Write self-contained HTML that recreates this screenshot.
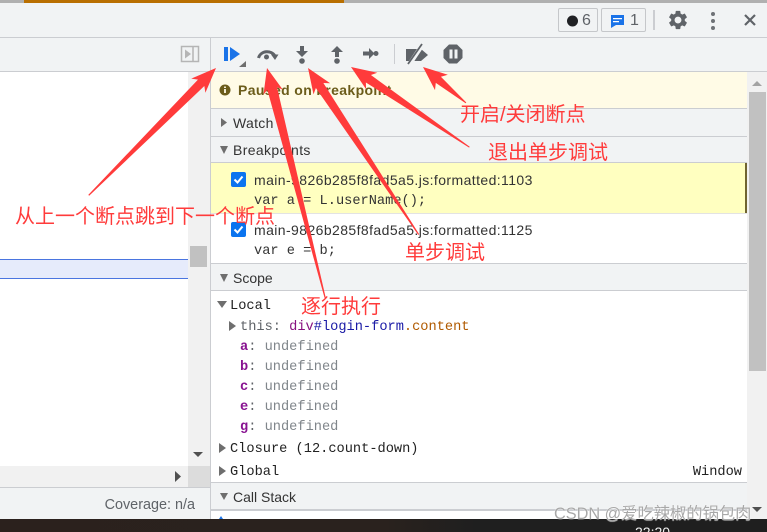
<!DOCTYPE html>
<html lang="zh"><head><meta charset="utf-8"><title>DevTools</title>
<style>
html,body{margin:0;padding:0;width:767px;height:532px;overflow:hidden;background:#f1f3f4}
#r{position:relative;width:767px;height:532px;overflow:hidden;font-family:"Liberation Sans",sans-serif;color:#333}
.b,.t{position:absolute}
.t{white-space:nowrap;line-height:20px;font-size:14px}
.m{font-family:"Liberation Mono","DejaVu Sans Mono",monospace;font-size:13.67px}
.cn{font-family:"Liberation Sans","Noto Sans CJK SC",sans-serif;font-size:20px;color:#ff3b3b;line-height:24px}
svg{position:absolute;left:0;top:0}
</style></head><body><div id="r">
<div class="b" style="left:0;top:0;width:767px;height:3px;background:#b0b0b0"></div>
<div class="b" style="left:24px;top:0;width:320px;height:3px;background:#b96f00"></div>
<div class="b" style="left:0;top:37px;width:767px;height:1px;background:#cbcdd1"></div>
<div class="b" style="left:0;top:71px;width:767px;height:1px;background:#cbcdd1"></div>
<div class="b" style="left:210px;top:38px;width:1px;height:481px;background:#cbcdd1"></div>

<div class="b" style="left:0;top:72px;width:188px;height:394px;background:#fff"></div>
<div class="b" style="left:188px;top:72px;width:22px;height:394px;background:#f1f1f1"></div>
<div class="b" style="left:190px;top:246px;width:17px;height:21px;background:#c1c1c1"></div>
<div class="b" style="left:0;top:259px;width:188px;height:20px;background:#e6ebfb;border-top:1px solid #4a75e0;border-bottom:1px solid #4a75e0;box-sizing:border-box"></div>
<div class="b" style="left:0;top:466px;width:188px;height:21px;background:#f1f1f1"></div>
<div class="b" style="left:188px;top:466px;width:22px;height:21px;background:#dcdcdc"></div>
<div class="b" style="left:0;top:487px;width:210px;height:1px;background:#cbcdd1"></div>
<div class="t" style="right:572px;top:495px;color:#5f6368;font-size:14.4px">Coverage: n/a</div>

<div class="b" style="left:211px;top:72px;width:536px;height:36px;background:#fffbe6"></div>
<div class="b" style="left:211px;top:108px;width:536px;height:1px;background:#cbcdd1"></div>
<div class="b" style="left:211px;top:136px;width:536px;height:1px;background:#cbcdd1"></div>
<div class="b" style="left:211px;top:162px;width:536px;height:1px;background:#cbcdd1"></div>
<div class="b" style="left:211px;top:163px;width:536px;height:50px;background:#ffffc0"></div>
<div class="b" style="left:745px;top:163px;width:2px;height:50px;background:#6f6430"></div>
<div class="b" style="left:211px;top:213px;width:536px;height:1px;background:#e3e3e3"></div>
<div class="b" style="left:211px;top:214px;width:536px;height:49px;background:#fff"></div>
<div class="b" style="left:211px;top:263px;width:536px;height:1px;background:#cbcdd1"></div>
<div class="b" style="left:211px;top:290px;width:536px;height:1px;background:#cbcdd1"></div>
<div class="b" style="left:211px;top:291px;width:536px;height:191px;background:#fff"></div>
<div class="b" style="left:211px;top:482px;width:536px;height:1px;background:#cbcdd1"></div>
<div class="b" style="left:211px;top:509px;width:536px;height:2px;background:#cbcdd1"></div>
<div class="b" style="left:211px;top:511px;width:536px;height:8px;background:#fff"></div>
<div class="b" style="left:747px;top:72px;width:20px;height:447px;background:#f1f1f1"></div>
<div class="b" style="left:749px;top:92px;width:17px;height:279px;background:#c1c1c1"></div>
<div class="b" style="left:0;top:519px;width:767px;height:13px;background:linear-gradient(90deg,#2b211d,#2a221e 50%,#1f1f1f 62%,#1f1f1f)"></div>
<div class="t" style="left:635px;top:522px;color:#f0f0f0;font-size:14px">22:20</div>

<div class="b" style="left:558px;top:8px;width:40px;height:24px;box-sizing:border-box;border:1px solid #c5c7ca;border-radius:2px"></div>
<div class="b" style="left:601px;top:8px;width:45px;height:24px;box-sizing:border-box;border:1px solid #c5c7ca;border-radius:2px"></div>
<div class="t" style="left:582px;top:11px;color:#5f6368;font-size:16px">6</div>
<div class="t" style="left:630px;top:11px;color:#5f6368;font-size:16px">1</div>
<div class="b" style="left:653px;top:10px;width:2px;height:20px;background:#cbcdd1"></div>

<svg width="767" height="532" viewBox="0 0 767 532">
<circle cx="572.500" cy="21" r="5.500" fill="#202124"/>
<path d="M611 15h13v10h-8l-5 3z" fill="#1a73e8"/>
<path d="M613 18h9v1.300h-9zM613 21h6v1.300h-6z" fill="#fff"/>
<g transform="translate(666.600 8.600) scale(.95)"><path fill="#5f6368" d="M19.140 12.940c.04-.3.06-.61.06-.94 0-.32-.02-.64-.07-.94l2.030-1.580c.18-.14.23-.41.12-.61l-1.920-3.320c-.12-.22-.37-.29-.59-.22l-2.390.96c-.5-.38-1.030-.7-1.620-.94l-.36-2.540c-.04-.24-.24-.41-.48-.41h-3.840c-.24 0-.43.17-.47.41l-.36 2.540c-.59.24-1.130.57-1.620.94l-2.390-.96c-.22-.08-.47 0-.59.22L2.740 8.870c-.12.21-.08.47.12.61l2.030 1.580c-.05.3-.09.63-.09.94s.02.64.07.94l-2.030 1.580c-.18.14-.23.41-.12.61l1.920 3.320c.12.22.37.29.59.22l2.390-.96c.5.38 1.030.7 1.620.94l.36 2.540c.05.24.24.41.48.41h3.840c.24 0 .44-.17.47-.41l.36-2.540c.59-.24 1.130-.56 1.620-.94l2.390.96c.22.08.47 0 .59-.22l1.920-3.320c.12-.22.07-.47-.12-.61l-2.010-1.580zM12 15.600c-1.980 0-3.600-1.620-3.600-3.600s1.620-3.600 3.600-3.600 3.600 1.620 3.600 3.600-1.620 3.600-3.600 3.600z"/></g>
<g fill="#6e7276"><circle cx="713" cy="14" r="2"/><circle cx="713" cy="21" r="2"/><circle cx="713" cy="28" r="2"/></g>
<path d="M745 15l10 10M755 15l-10 10" stroke="#5f6368" stroke-width="2.200" fill="none"/>

<rect x="181.500" y="46.500" width="17" height="15" fill="none" stroke="#b5b5b5" stroke-width="1.500"/>
<path d="M193 46v16" stroke="#b5b5b5" stroke-width="1.500"/>
<path d="M185 49.500l6 4.500-6 4.500z" fill="#b5b5b5"/>

<path d="M224 47h4v14h-4zM230 47l10 7-10 7z" fill="#1a73e8"/>
<path d="M246 61v6h-7z" fill="#6e6e6e"/>
<path d="M258.500 58a9 8.500 0 0 1 16.500-2" fill="none" stroke="#5f6368" stroke-width="3"/>
<path d="M271 54.500h7.500l-3.500 5.500z" fill="#5f6368"/>
<circle cx="266.500" cy="57" r="2.500" fill="#5f6368"/>
<path d="M300 46h4v5h4l-6 6-6-6h4z" fill="#5f6368"/><circle cx="302" cy="61" r="2.800" fill="#5f6368"/>
<path d="M335 57h4v-5h4l-6-6-6 6h4z" fill="#5f6368"/><circle cx="337" cy="61" r="2.800" fill="#5f6368"/>
<path d="M363 51.500h6v-3.500l5.500 5.500-5.500 5.500v-3.500h-6z" fill="#5f6368"/><circle cx="376" cy="53.500" r="2.500" fill="#5f6368"/>
<path d="M394.500 44v20" stroke="#cbcdd1"/>
<path d="M406 49h15l7 6-7 6h-15z" fill="#5f6368"/>
<path d="M409 65l14-21" stroke="#f1f3f4" stroke-width="4.500"/>
<path d="M408 64l14-20" stroke="#5f6368" stroke-width="1.800"/>
<path d="M449 44.500h8l5.500 5.500v8l-5.500 5.500h-8l-5.500-5.500v-8z" fill="#5f6368"/>
<path d="M449.500 49.500h3v9h-3zM454.500 49.500h3v9h-3z" fill="#f1f3f4"/>

<circle cx="225" cy="90" r="5.500" fill="#6b5c1a"/>
<path d="M224.100 89h1.800v4h-1.800zM224.100 86.500h1.800v1.500h-1.800z" fill="#fffbe6"/>

<g fill="#6e6e6e">
<path d="M221 118l6 4.500-6 4.500z"/>
<path d="M220 146h8l-4 8z"/>
<path d="M220 274h8l-4 8z"/>
<path d="M217 301h10l-5 7z"/>
<path d="M229 321l7 5-7 5z"/>
<path d="M219 443l7 5-7 5z"/>
<path d="M219 466l7 5-7 5z"/>
<path d="M220 493h8l-4 7z"/>
<path d="M752 86l5-5 5 5z" fill="#a3a3a3"/>
<path d="M193 452h10l-5 5z" fill="#505050"/>
<path d="M175 471l6 5.500-6 5.500z" fill="#505050"/>
<path d="M752 507h10l-5 5z" fill="#505050"/>
</g>
<path d="M221 516l2 3h-4z" fill="#1a73e8"/>

<rect x="231" y="172" width="15" height="15" rx="2" fill="#0b74ef"/>
<path d="M234.500 179.500l3 3 5-6" fill="none" stroke="#fff" stroke-width="2"/>
<rect x="231" y="222" width="15" height="15" rx="2" fill="#0b74ef"/>
<path d="M234.500 229.500l3 3 5-6" fill="none" stroke="#fff" stroke-width="2"/>
</svg>

<div class="t" style="left:238px;top:80px;font-weight:bold;color:#6b5c1a;font-size:14px;letter-spacing:.37px">Paused on breakpoint</div>
<div class="t" style="left:233px;top:113px;letter-spacing:.3px">Watch</div>
<div class="t" style="left:233px;top:140px;letter-spacing:.35px">Breakpoints</div>
<div class="t" style="left:254px;top:170px;letter-spacing:.41px">main-9826b285f8fad5a5.js:formatted:1103</div>
<div class="t m" style="left:254px;top:192px">var a = L.userName();</div>
<div class="t" style="left:254px;top:220px;letter-spacing:.41px">main-9826b285f8fad5a5.js:formatted:1125</div>
<div class="t m" style="left:254px;top:242px">var e = b;</div>
<div class="t" style="left:233px;top:268px">Scope</div>
<div class="t m" style="left:230px;top:297px;color:#222">Local</div>
<div class="t m" style="left:240px;top:318px;color:#5f6368">this: <span style="color:#881280">div</span><span style="color:#1a1aa6">#login-form</span><span style="color:#b05a00">.content</span></div>
<div class="t m" style="left:240px;top:338px;color:#5f6368"><b style="color:#881391">a</b>: <span style="color:#80868b">undefined</span></div>
<div class="t m" style="left:240px;top:358px;color:#5f6368"><b style="color:#881391">b</b>: <span style="color:#80868b">undefined</span></div>
<div class="t m" style="left:240px;top:378px;color:#5f6368"><b style="color:#881391">c</b>: <span style="color:#80868b">undefined</span></div>
<div class="t m" style="left:240px;top:398px;color:#5f6368"><b style="color:#881391">e</b>: <span style="color:#80868b">undefined</span></div>
<div class="t m" style="left:240px;top:418px;color:#5f6368"><b style="color:#881391">g</b>: <span style="color:#80868b">undefined</span></div>
<div class="t m" style="left:230px;top:440px;color:#222">Closure (12.count-down)</div>
<div class="t m" style="left:230px;top:463px;color:#222">Global</div>
<div class="t m" style="right:25px;top:463px;color:#222">Window</div>
<div class="t" style="left:233px;top:487px">Call Stack</div>

<svg width="767" height="532" viewBox="0 0 767 532">
<g fill="#ff3b3b">
<g transform="translate(216 68) rotate(135)"><polygon points="0,0 25,-10 21,-4.500 180,-.6 180,.6 21,4.500 25,10"/></g>
<g transform="translate(267 68) rotate(75.800)"><polygon points="0,0 25,-10 21,-5 237,-.6 237,.6 21,5 25,10"/></g>
<g transform="translate(308 68) rotate(56.400)"><polygon points="0,0 25,-10 21,-4.500 200,-.6 200,.6 21,4.500 25,10"/></g>
<g transform="translate(351 67) rotate(34.100)"><polygon points="0,0 25,-10 21,-4.500 143,-.5 143,.5 21,4.500 25,10"/></g>
<g transform="translate(423 67) rotate(39.900)"><polygon points="0,0 24,-10 20,-4 56,-.5 56,.5 20,4 24,10"/></g>
</g></svg>

<div class="t cn" style="left:15px;top:205px">从上一个断点跳到下一个断点</div>
<div class="t cn" style="left:460px;top:103px">开启/关闭断点</div>
<div class="t cn" style="left:488px;top:141px">退出单步调试</div>
<div class="t cn" style="left:405px;top:241px">单步调试</div>
<div class="t cn" style="left:301px;top:295px">逐行执行</div>
<div class="t" style="left:554px;top:504px;font-family:'Liberation Sans','Noto Sans CJK SC',sans-serif;font-size:16.3px;color:#a8a8a8;text-shadow:0 0 1px #fff,0 0 1px #fff">CSDN @爱吃辣椒的锅包肉</div>
</div></body></html>
